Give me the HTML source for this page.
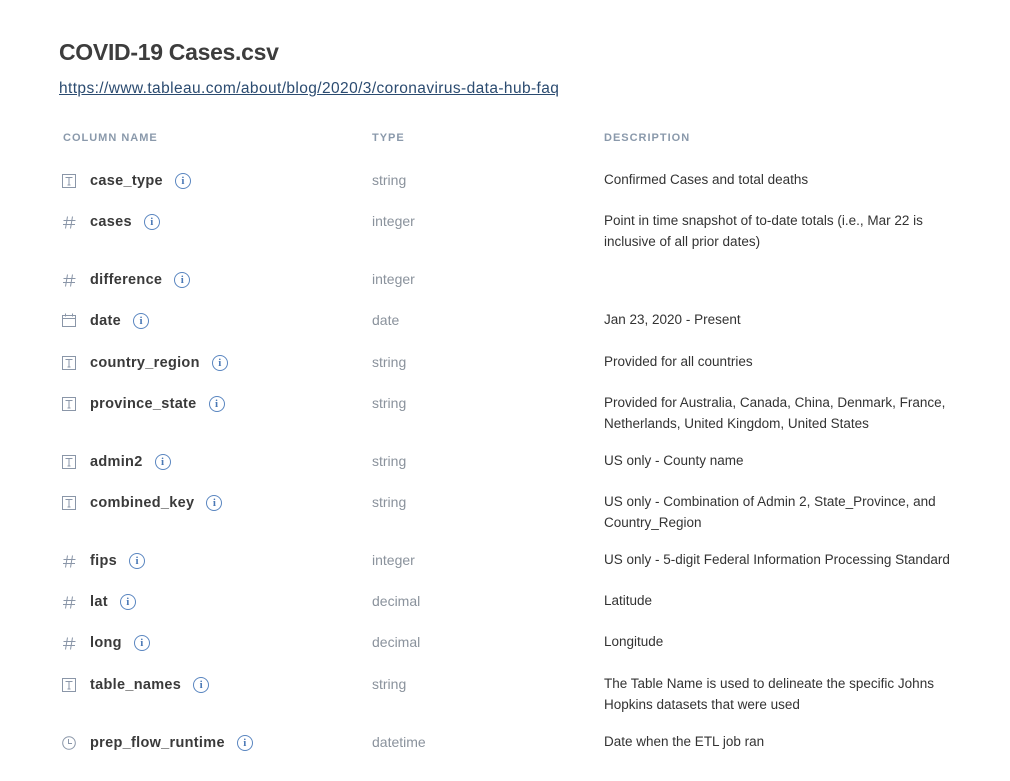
<!DOCTYPE html>
<html><head><meta charset="utf-8"><style>
body{margin:0;background:#fff;width:1010px;height:781px;position:relative;overflow:hidden;font-family:"Liberation Sans",sans-serif;}
.a{position:absolute;white-space:nowrap;}
h1{position:absolute;left:59px;top:39px;margin:0;font-size:23px;font-weight:bold;color:#3d3d3d;letter-spacing:-0.3px;}
.link{left:59px;top:80px;font-size:15.5px;letter-spacing:0.4px;color:#2b4b70;text-decoration:underline;}
.hd{top:132px;font-size:11px;font-weight:bold;color:#8a99ab;letter-spacing:1px;}
.nm{left:90px;font-size:14.5px;font-weight:bold;color:#3a3a3a;letter-spacing:0.3px;margin-top:2px;}
.ty{left:372px;font-size:14px;color:#8a929c;margin-top:1px;}
.ds{left:604px;font-size:13.5px;color:#333;line-height:21px;}
.ic{left:62px;}
.inf{display:inline-block;width:14px;height:14px;border:1.3px solid #5a86c0;border-radius:50%;color:#4a78b5;font-size:11px;font-weight:bold;text-align:center;line-height:14px;vertical-align:middle;margin-left:12px;box-sizing:content-box;font-family:"Liberation Serif",serif;letter-spacing:0;}
</style></head><body>
<h1>COVID-19 Cases.csv</h1>
<div class="a link">https://www.tableau.com/about/blog/2020/3/coronavirus-data-hub-faq</div>
<div class="a hd" style="left:63px">COLUMN NAME</div>
<div class="a hd" style="left:372px">TYPE</div>
<div class="a hd" style="left:604px">DESCRIPTION</div>

<svg width="0" height="0" style="position:absolute"><defs>
<g id="T"><rect x="0.5" y="0.5" width="13" height="13" fill="none" stroke="#8a96a8"/><path d="M3.5 3.5h7M7 3.5v7.5M5.5 11h3" stroke="#8a96a8" fill="none"/></g>
<g id="H"><path d="M5.5 1.5L3.5 13.5M10.5 1.5L8.5 13.5M1.5 5.5h12M1 9.5h12" stroke="#8a96a8" fill="none"/></g>
<g id="D"><rect x="0.5" y="2.5" width="13" height="11" fill="none" stroke="#8a96a8"/><path d="M0.5 5.5h13M3.5 0.5v3M10.5 0.5v3" stroke="#8a96a8" fill="none"/></g>
<g id="C"><circle cx="7" cy="7" r="6.3" fill="none" stroke="#8a96a8"/><path d="M6.5 3v4.5h3.5" stroke="#8a96a8" fill="none"/></g>
</defs></svg>

<svg class="a ic" style="top:174px" width="14" height="14"><use href="#T"/></svg>
<div class="a nm" style="top:171px">case_type<span class="inf">i</span></div>
<div class="a ty" style="top:171px">string</div>
<div class="a ds" style="top:169px">Confirmed Cases and total deaths</div>

<svg class="a ic" style="top:215px" width="14" height="14"><use href="#H"/></svg>
<div class="a nm" style="top:212px">cases<span class="inf">i</span></div>
<div class="a ty" style="top:212px">integer</div>
<div class="a ds" style="top:210px">Point in time snapshot of to-date totals (i.e., Mar 22 is<br>inclusive of all prior dates)</div>

<svg class="a ic" style="top:273px" width="14" height="14"><use href="#H"/></svg>
<div class="a nm" style="top:270px">difference<span class="inf">i</span></div>
<div class="a ty" style="top:270px">integer</div>

<svg class="a ic" style="top:313px" width="14" height="14"><use href="#D"/></svg>
<div class="a nm" style="top:311px">date<span class="inf">i</span></div>
<div class="a ty" style="top:311px">date</div>
<div class="a ds" style="top:309px">Jan 23, 2020 - Present</div>

<svg class="a ic" style="top:356px" width="14" height="14"><use href="#T"/></svg>
<div class="a nm" style="top:353px">country_region<span class="inf">i</span></div>
<div class="a ty" style="top:353px">string</div>
<div class="a ds" style="top:351px">Provided for all countries</div>

<svg class="a ic" style="top:397px" width="14" height="14"><use href="#T"/></svg>
<div class="a nm" style="top:394px">province_state<span class="inf">i</span></div>
<div class="a ty" style="top:394px">string</div>
<div class="a ds" style="top:392px">Provided for Australia, Canada, China, Denmark, France,<br>Netherlands, United Kingdom, United States</div>

<svg class="a ic" style="top:455px" width="14" height="14"><use href="#T"/></svg>
<div class="a nm" style="top:452px">admin2<span class="inf">i</span></div>
<div class="a ty" style="top:452px">string</div>
<div class="a ds" style="top:450px">US only - County name</div>

<svg class="a ic" style="top:496px" width="14" height="14"><use href="#T"/></svg>
<div class="a nm" style="top:493px">combined_key<span class="inf">i</span></div>
<div class="a ty" style="top:493px">string</div>
<div class="a ds" style="top:491px">US only - Combination of Admin 2, State_Province, and<br>Country_Region</div>

<svg class="a ic" style="top:554px" width="14" height="14"><use href="#H"/></svg>
<div class="a nm" style="top:551px">fips<span class="inf">i</span></div>
<div class="a ty" style="top:551px">integer</div>
<div class="a ds" style="top:549px">US only - 5-digit Federal Information Processing Standard</div>

<svg class="a ic" style="top:595px" width="14" height="14"><use href="#H"/></svg>
<div class="a nm" style="top:592px">lat<span class="inf">i</span></div>
<div class="a ty" style="top:592px">decimal</div>
<div class="a ds" style="top:590px">Latitude</div>

<svg class="a ic" style="top:636px" width="14" height="14"><use href="#H"/></svg>
<div class="a nm" style="top:633px">long<span class="inf">i</span></div>
<div class="a ty" style="top:633px">decimal</div>
<div class="a ds" style="top:631px">Longitude</div>

<svg class="a ic" style="top:678px" width="14" height="14"><use href="#T"/></svg>
<div class="a nm" style="top:675px">table_names<span class="inf">i</span></div>
<div class="a ty" style="top:675px">string</div>
<div class="a ds" style="top:673px">The Table Name is used to delineate the specific Johns<br>Hopkins datasets that were used</div>

<svg class="a ic" style="top:736px" width="14" height="14"><use href="#C"/></svg>
<div class="a nm" style="top:733px">prep_flow_runtime<span class="inf">i</span></div>
<div class="a ty" style="top:733px">datetime</div>
<div class="a ds" style="top:731px">Date when the ETL job ran</div>
</body></html>
